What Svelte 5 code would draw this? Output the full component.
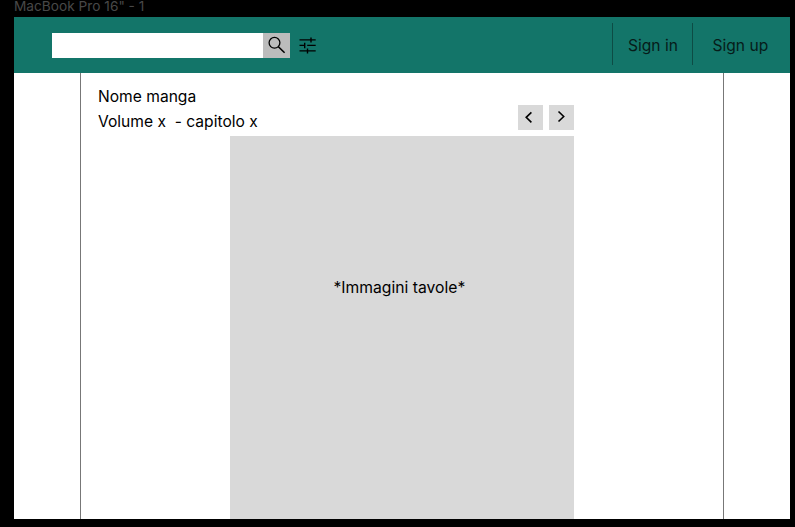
<script>
  const title = 'Nome manga';
  const chapter = 'Volume x  - capitolo x';
  const links = ['Sign in', 'Sign up'];
</script>

<div class="canvas">
  <div class="label">MacBook Pro 16" - 1</div>
  <div class="frame">
    <header>
      <div class="search">
        <input type="text" aria-label="Cerca" />
        <button class="go" aria-label="Cerca">
          <svg width="27" height="25" viewBox="0 0 27 25" fill="none" stroke="#000">
            <circle cx="11.5" cy="9.8" r="5.4" stroke-width="1.3" />
            <path d="M15.4 13.7L21.6 19.7" stroke-width="1.6" />
          </svg>
        </button>
      </div>
      <svg class="filters" width="18" height="17" viewBox="0 0 18 17" fill="none" stroke="#000" stroke-width="1.4">
        <path d="M.5 2.9H11.8M12 .4V5.4M12 2.9H16.7M.5 8.4H5.7M5.7 5.8V11.2M8.2 8.4H16.7M.5 13.9H8.3M8.5 11.5V16.4M8.5 13.9H16.7" />
      </svg>
      <nav>
        {#each links as link}
          <a href="#top">{link}</a>
        {/each}
      </nav>
    </header>
    <main>
      <section>
        <div class="top">
          <div class="info">
            <div class="line">{title}</div>
            <div class="line">{chapter}</div>
          </div>
          <div class="pager">
            <button aria-label="Precedente">
              <svg width="25" height="25" viewBox="0 0 25 25"><path d="M13.4 7.3L8.2 12.3L13.4 17.3" /></svg>
            </button>
            <button aria-label="Successivo">
              <svg width="25" height="25" viewBox="0 0 25 25"><path d="M9.5 6.5L14.7 11.5L9.5 16.5" /></svg>
            </button>
          </div>
        </div>
        <div class="page">*Immagini tavole*</div>
      </section>
    </main>
  </div>
</div>

<style>
  .canvas {
    box-sizing: border-box;
    width: 795px;
    height: 527px;
    padding: 0 5px 8px 14px;
    background: #000;
    font: 15.7px/25px Inter, sans-serif;
    color: #000;
    display: flex;
    flex-direction: column;
  }
  .label {
    height: 17px;
    line-height: 13px;
    font-size: 13.7px;
    color: #484848;
    white-space: nowrap;
  }
  .frame {
    flex: 1;
    display: flex;
    flex-direction: column;
    background: #fff;
  }
  header {
    box-sizing: border-box;
    height: 56px;
    padding-left: 38px;
    display: flex;
    align-items: center;
    background: #137569;
  }
  .search {
    display: flex;
    height: 25px;
  }
  input {
    box-sizing: border-box;
    width: 211px;
    border: 0;
    padding: 0 6px;
    background: #fff;
    font: inherit;
  }
  button {
    padding: 0;
    border: 0;
    display: block;
  }
  button svg {
    display: block;
  }
  .go {
    width: 27px;
    background: #bcbcbc;
  }
  .filters {
    margin-left: 9px;
  }
  nav {
    margin-left: auto;
    display: flex;
    height: 42px;
    margin-bottom: 2px;
  }
  nav a {
    box-sizing: border-box;
    width: 80px;
    padding: 3px 0 0 15px;
    border-left: 1px solid #0d4c45;
    font-size: 15.6px;
    line-height: 40px;
    color: #061c19;
    text-decoration: none;
    white-space: nowrap;
  }
  nav a:last-child {
    width: 98px;
    padding-left: 19.5px;
  }
  main {
    flex: 1;
    display: flex;
    padding: 0 66px;
  }
  section {
    flex: 1;
    display: flex;
    flex-direction: column;
    border: solid #777;
    border-width: 0 1px;
  }
  .top {
    display: flex;
    justify-content: space-between;
    height: 63px;
    padding: 0 149px 0 17px;
  }
  .info {
    padding-top: 11px;
    font-size: 15.6px;
  }
  .line {
    white-space: pre;
  }
  .pager {
    display: flex;
    gap: 6px;
    padding-top: 32px;
  }
  .pager button {
    width: 25px;
    height: 25px;
    background: #d9d9d9;
  }
  .pager path {
    fill: none;
    stroke: #000;
    stroke-width: 1.6;
  }
  .page {
    box-sizing: border-box;
    flex: 1;
    width: 344px;
    margin-left: 149px;
    padding: 139px 0 0 103.5px;
    background: #d9d9d9;
    white-space: nowrap;
  }
</style>
